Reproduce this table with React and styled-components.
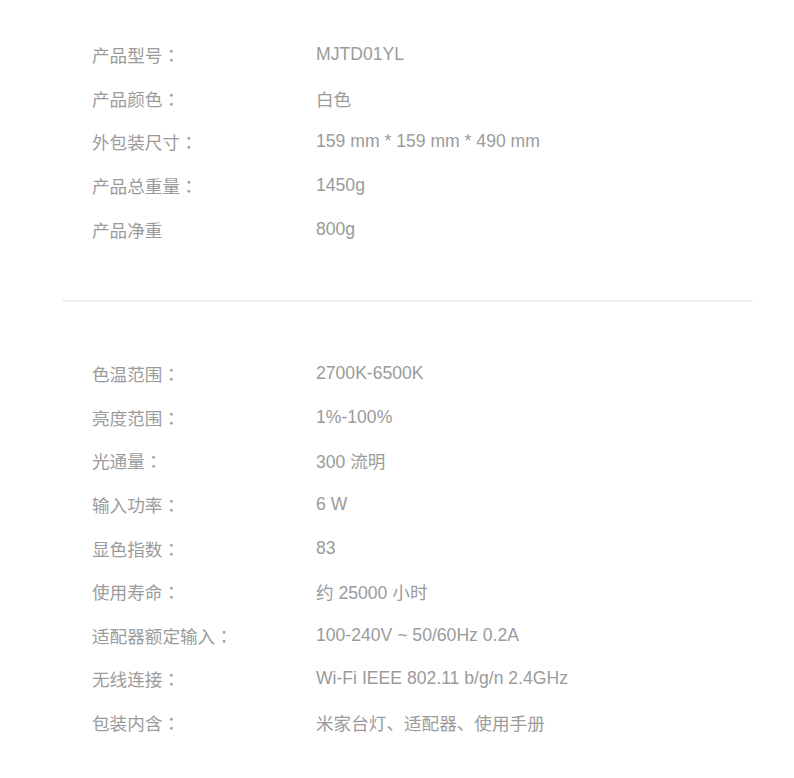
import React from 'react';
import styled, { createGlobalStyle } from 'styled-components';

const GlobalStyle = createGlobalStyle`
    body {
        margin: 0;
        background: #fff;
        font-family: "Liberation Sans", Arial, "Noto Sans CJK SC", sans-serif;
    }
`
const Page = styled.div`
    width: 691px;
    margin-left: 62px;
    padding-top: 33px;
`
const Section = styled.div`
    padding-left: 30px;
`
const Row = styled.div`
    display: flex;
    height: 43.6px;
    align-items: center;
    font-size: 17.6px;
    color: #9b9b9b;
`
const Label = styled.span`
    width: 224px;
    flex-shrink: 0;
`
const Colon = styled.span`
    font-family: "Noto Sans CJK TC", sans-serif;
`
const Value = styled.span`
    white-space: nowrap;
`
const Divider = styled.hr`
    border: 0;
    height: 2px;
    background: #f1f1f1;
    margin: 49px 0 50px;
`

const basic = [
    ['产品型号', 'MJTD01YL'],
    ['产品颜色', '白色'],
    ['外包装尺寸', '159 mm * 159 mm * 490 mm'],
    ['产品总重量', '1450g'],
    ['产品净重', '800g', true],
]

const specs = [
    ['色温范围', '2700K-6500K'],
    ['亮度范围', '1%-100%'],
    ['光通量', '300 流明'],
    ['输入功率', '6 W'],
    ['显色指数', '83'],
    ['使用寿命', '约 25000 小时'],
    ['适配器额定输入', '100-240V ~ 50/60Hz 0.2A'],
    ['无线连接', 'Wi-Fi IEEE 802.11 b/g/n 2.4GHz'],
    ['包装内含', '米家台灯、适配器、使用手册'],
]

function SpecList({items}) {
    return (
        <Section>
            {items.map(([label, value, noColon]) => (
                <Row key={label}>
                    <Label>
                        {label}
                        {!noColon && <Colon>：</Colon>}
                    </Label>
                    <Value>{value}</Value>
                </Row>
            ))}
        </Section>
    )
}

function App() {
    return (
        <>
            <GlobalStyle />
            <Page>
                <SpecList items={basic} />
                <Divider />
                <SpecList items={specs} />
            </Page>
        </>
    )
}

export default App;
